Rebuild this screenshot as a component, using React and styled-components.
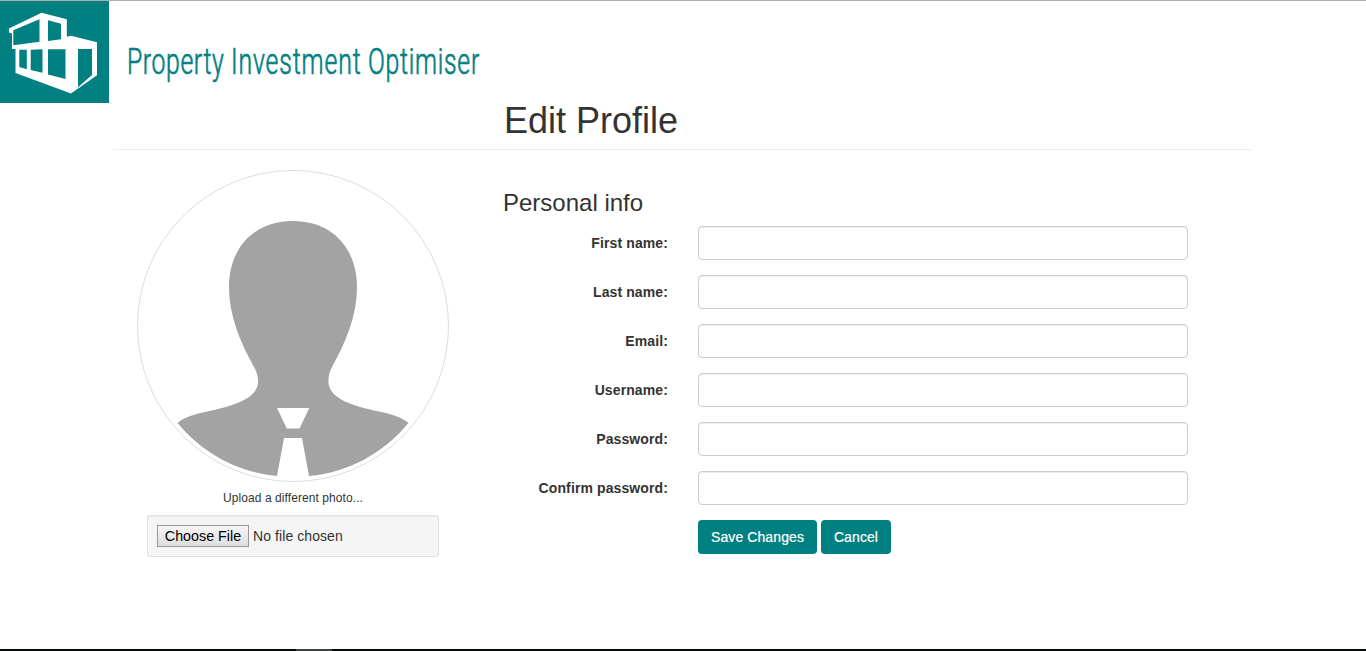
import React from 'react';
import styled, { createGlobalStyle } from 'styled-components';

const TEAL = '#008080';

const GlobalStyle = createGlobalStyle`
  *, *::before, *::after { box-sizing: border-box; }
  body {
    margin: 0;
    background: #fff;
    color: #333;
    font: 14px/20px "Liberation Sans", Arial, sans-serif;
  }
`;

const Page = styled.div`
  display: flex;
  flex-direction: column;
  height: 651px;
  overflow: hidden;
  border-top: 1px solid #b0b0b0;
`;

const Header = styled.header`
  display: flex;
  height: 102px;
`;

const Logo = styled.svg`
  display: block;
  flex: none;
  width: 109px;
  height: 102px;
`;

const Brand = styled.div`
  display: flex;
  margin: 39px 0 0 18px;
  color: ${TEAL};
  font: 300 37px/44px Roboto, "Liberation Sans", sans-serif;
  -webkit-text-stroke: 0.7px ${TEAL};
  white-space: nowrap;
`;

const BrandWord = styled.span`
  width: ${(p) => p.$width}px;
  letter-spacing: ${(p) => p.$spacing}px;
  transform: scaleX(0.67);
  transform-origin: 0 50%;
`;

const Container = styled.main`
  width: 1140px;
  margin-left: 113px;
`;

const Title = styled.h1`
  margin: 0;
  padding: 0 0 9px 391px;
  height: 47px;
  border-bottom: 1px solid #eee;
  font-size: 36px;
  line-height: 36px;
  font-weight: 400;
`;

const Columns = styled.div`
  display: flex;
  margin-left: -15px;
`;

const PhotoColumn = styled.section`
  display: flex;
  flex-direction: column;
  align-items: center;
  width: 390px;
  padding-top: 20px;
`;

const Avatar = styled.svg`
  display: block;
  width: 312px;
  height: 312px;
`;

const Hint = styled.p`
  margin: 6px 0 7px;
  font-size: 12px;
  line-height: 20px;
  letter-spacing: 0.08px;
`;

const FileWell = styled.label`
  display: flex;
  align-items: center;
  gap: 4px;
  width: 292px;
  height: 42px;
  padding: 0 9px;
  border: 1px solid #e3e3e3;
  border-radius: 3px;
  background: #f5f5f5;
  box-shadow: inset 0 1px 1px rgba(0, 0, 0, 0.05);
  letter-spacing: 0.08px;
`;

const FileButton = styled.button`
  width: 92px;
  height: 22px;
  padding: 0;
  border: 1px solid #999;
  background: linear-gradient(#f6f6f6, #dedede);
  color: #000;
  font: inherit;
  font-size: 14.3px;
  line-height: 19px;
  white-space: nowrap;
`;

const FormColumn = styled.form`
  display: flex;
  flex-direction: column;
  gap: 15px;
  padding: 40px 0 0 15px;
`;

const Subtitle = styled.h3`
  margin: 0 0 -5px;
  font-size: 24px;
  line-height: 26px;
  font-weight: 400;
`;

const Field = styled.div`
  display: grid;
  grid-template-columns: 165px 490px;
  column-gap: 30px;
`;

const Label = styled.label`
  padding-top: 7px;
  text-align: right;
  font-weight: 700;
  letter-spacing: 0.11px;
`;

const Input = styled.input`
  width: 100%;
  height: 34px;
  padding: 6px 12px;
  border: 1px solid #ccc;
  border-radius: 4px;
  background: #fff;
  box-shadow: inset 0 1px 1px rgba(0, 0, 0, 0.075);
  font: inherit;
`;

const Actions = styled.div`
  display: flex;
  gap: 4px;
  padding-left: 195px;
`;

const Button = styled.button`
  width: ${(p) => p.$width}px;
  height: 34px;
  padding: 0;
  border: 0;
  border-radius: 4px;
  background: ${TEAL};
  color: #fff;
  font: inherit;
  letter-spacing: 0.1px;
  -webkit-text-stroke: 0.2px #fff;
  white-space: nowrap;
`;

const BottomEdge = styled.footer`
  height: 2px;
  margin-top: auto;
  background: #050a0b;
`;

const ActiveMark = styled.div`
  width: 36px;
  height: 2px;
  margin-left: 296px;
  background: #3c4142;
`;

const fields = [
  { label: 'First name:', type: 'text' },
  { label: 'Last name:', type: 'text' },
  { label: 'Email:', type: 'text' },
  { label: 'Username:', type: 'text' },
  { label: 'Password:', type: 'password' },
  { label: 'Confirm password:', type: 'password' },
];

function HouseLogo() {
  return (
    <Logo viewBox="0 1 109 102" aria-hidden="true">
      <rect y="1" width="109" height="102" fill={TEAL} />
      <path
        fill="#fff"
        d="M9 28.5 41.5 12.8 66.8 19.3V36.8L71 35.7 97 42.3V75.3L71 93.5 15.5 73V49H12V33.5L9 32.5Z"
      />
      <path
        fill={TEAL}
        d="M13.3 30.2 39.5 19.3V41.7L13.3 45.3ZM48 20.3 61 23.7V39.3L48 41ZM19.3 49.7H26.8V69.3L19.3 67ZM30.7 49.7 42.5 49.3V72.7L30.7 70ZM48 49.3H65.5V79L48 74.5ZM78 49H92V75L78 87.3Z"
      />
    </Logo>
  );
}

function ProfilePicture() {
  return (
    <Avatar viewBox="137 170 312 312" role="img" aria-label="Profile photo">
      <circle cx="293" cy="326" r="155.5" fill="#fff" stroke="#ddd" />
      <path
        fill="#a3a3a3"
        d="M293 221C333 221 357 249 357 287C357 315 346 342 332.5 366C329 372 328.3 377 328.5 383C330 399 353 406 379 411.5C391 414 402 417 408.5 423C383 453.5 348.5 472.5 309 476L302 438H284L277 476C238 472.5 203 453.5 177.5 423C184 417 195 414 207 411.5C233 406 256.500 399 258 383C258.300 377 257 372 253.500 366C240 342 229 315 229 287C229 249 253 221 293 221Z"
      />
      <path fill="#fff" d="M277 408H309.300L299.500 428.500H286.800Z" />
    </Avatar>
  );
}

export default function App() {
  return (
    <>
      <GlobalStyle />
      <Page>
        <Header>
          <HouseLogo />
          <Brand>
            <BrandWord $width={103.5} $spacing={0.9}>Property</BrandWord>
            <BrandWord $width={137.5} $spacing={1.3}>Investment</BrandWord>
            <BrandWord $width={112} $spacing={1.1}>Optimiser</BrandWord>
          </Brand>
        </Header>
        <Container>
          <Title>Edit Profile</Title>
          <Columns>
            <PhotoColumn>
              <ProfilePicture />
              <Hint>Upload a different photo...</Hint>
              <FileWell>
                <FileButton type="button">Choose File</FileButton>
                <span>No file chosen</span>
              </FileWell>
            </PhotoColumn>
            <FormColumn>
              <Subtitle>Personal info</Subtitle>
              {fields.map(({ label, type }) => (
                <Field key={label}>
                  <Label>{label}</Label>
                  <Input type={type} aria-label={label} />
                </Field>
              ))}
              <Actions>
                <Button type="button" $width={119}>Save Changes</Button>
                <Button type="button" $width={70}>Cancel</Button>
              </Actions>
            </FormColumn>
          </Columns>
        </Container>
        <BottomEdge>
          <ActiveMark />
        </BottomEdge>
      </Page>
    </>
  );
}
